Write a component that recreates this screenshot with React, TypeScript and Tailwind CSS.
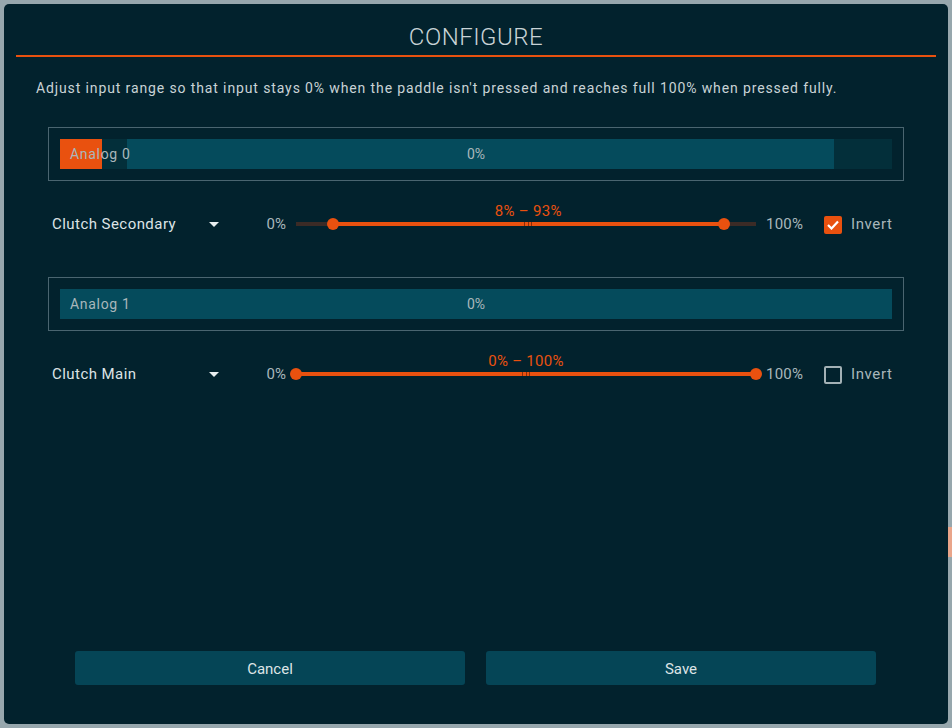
import React from "react";

function Meter({ label, value, lo, hi }: { label: string; value: number; lo: number; hi: number }) {
  return (
    <div className="border border-[#4a6570] p-[11px]">
      <div className="relative h-[30px] bg-[#032f3a]">
        <div
          className="absolute top-0 bottom-0 bg-[#054b5c]"
          style={{ left: `${lo}%`, width: `${hi - lo}%` }}
        />
        <div className="absolute top-0 bottom-0 left-0 bg-[#e9510f]" style={{ width: `${value}%` }} />
        <div className="absolute inset-0 flex items-center pl-[10px] pt-[1px] text-[14px] tracking-[0.7px] text-[#a9b7bb]">{label}</div>
        <div className="absolute inset-0 flex items-center justify-center pt-[1px] text-[14px] text-[#a9b7bb]">0%</div>
      </div>
    </div>
  );
}

function Row({ name, lo, hi, checked }: { name: string; lo: number; hi: number; checked: boolean }) {
  return (
    <div className="flex items-center h-[36px] pl-[4px] pt-[1px]">
      <div className="w-[173px] flex items-center justify-between pr-[6px] text-[15px] tracking-[0.45px] text-[#dde4e6]">
        <span>{name}</span>
        <svg width="10" height="6" viewBox="0 0 10 6">
          <path d="M0 0 L10 0 L5 5 Z" fill="#e8eef0" />
        </svg>
      </div>
      <div className="w-[61px] text-right text-[15px] text-[#a9b7bb]">0%</div>
      <div className="relative ml-[10px] w-[460px] h-[36px] -mt-[1px]">
        <div className="absolute left-0 right-0 top-[16px] h-[4px] bg-[#3b2b26]" />
        <div
          className="absolute top-[16px] h-[4px] bg-[#e9510f]"
          style={{ left: `${lo}%`, width: `${hi - lo}%` }}
        />
        <div
          className="absolute top-[16px] h-[4px] w-[12px] flex justify-between px-[2px] -translate-x-1/2"
          style={{ left: `${(lo + hi) / 2}%` }}
        >
          <div className="w-[1px] h-full bg-[#8a2d08]" />
          <div className="w-[1px] h-full bg-[#8a2d08]" />
          <div className="w-[1px] h-full bg-[#8a2d08]" />
        </div>
        <div
          className="absolute top-[12px] w-[12px] h-[12px] rounded-full bg-[#e9510f] -translate-x-1/2"
          style={{ left: `${lo}%` }}
        />
        <div
          className="absolute top-[12px] w-[12px] h-[12px] rounded-full bg-[#e9510f] -translate-x-1/2"
          style={{ left: `${hi}%` }}
        />
        <div
          className="absolute top-[-6px] -translate-x-1/2 whitespace-nowrap text-[15px] tracking-[0.3px] text-[#e9510f]"
          style={{ left: `${(lo + hi) / 2}%` }}
        >
          {lo}% – {hi}%
        </div>
      </div>
      <div className="ml-[10px] w-[58px] text-[15px] tracking-[0.2px] text-[#a9b7bb]">100%</div>
      {checked ? (
        <div className="w-[18px] h-[18px] rounded-[2px] bg-[#e9510f] flex items-center justify-center">
          <svg width="12" height="10" viewBox="0 0 12 10">
            <path d="M1 5 L4.5 8.5 L11 1.5" stroke="#fff" strokeWidth="2.2" fill="none" />
          </svg>
        </div>
      ) : (
        <div className="w-[18px] h-[18px] rounded-[2px] border-2 border-[#a3b1b5]" />
      )}
      <div className="ml-[9px] text-[15px] tracking-[0.6px] text-[#a9b7bb]">Invert</div>
    </div>
  );
}

export default function App() {
  return (
    <div
      className="relative w-[952px] h-[728px] bg-[#97a7ad] pt-[4px] pl-[4px] overflow-hidden"
      style={{ fontFamily: "'Roboto', 'Liberation Sans', sans-serif" }}
    >
      <div className="absolute right-0 top-[527px] w-[4px] h-[30px] bg-[#e9a58a]" />
      <div className="relative w-[944px] h-[720px] bg-[#02222d] rounded-[5px] flex flex-col pt-[18px] pb-[39px]">
        <div className="h-[30px] leading-[30px] text-center text-[24px] font-light text-[#c9d3d6] tracking-[0.5px]">
          CONFIGURE
        </div>
        <div className="mx-[12px] mt-[3px] h-[2px] bg-[#e9510f]" />
        <div className="mt-[21px] pl-[32px] h-[20px] leading-[20px] text-[14px] tracking-[0.88px] text-[#c9d3d6]">
          Adjust input range so that input stays 0% when the paddle isn't pressed and reaches full 100% when pressed fully.
        </div>
        <div className="px-[44px]">
          <div className="mt-[29px]">
            <Meter label="Analog 0" value={5} lo={8} hi={93} />
          </div>
          <div className="mt-[25px]">
            <Row name="Clutch Secondary" lo={8} hi={93} checked={true} />
          </div>
          <div className="mt-[35px]">
            <Meter label="Analog 1" value={0} lo={0} hi={100} />
          </div>
          <div className="mt-[25px]">
            <Row name="Clutch Main" lo={0} hi={100} checked={false} />
          </div>
        </div>
        <div className="mt-auto flex gap-[21px] px-[71px]">
          <button className="w-[390px] h-[34px] pt-[2px] rounded-[3px] bg-[#054556] text-[15px] text-[#dde4e6]">Cancel</button>
          <button className="w-[390px] h-[34px] pt-[2px] rounded-[3px] bg-[#054556] text-[15px] text-[#dde4e6]">Save</button>
        </div>
      </div>
    </div>
  );
}
